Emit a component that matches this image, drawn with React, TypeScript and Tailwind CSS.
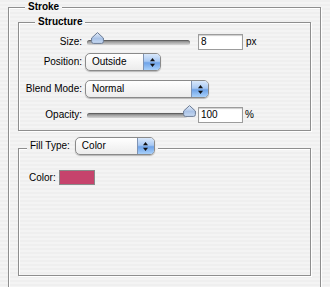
import React from "react";

const stripes =
  "bg-[repeating-linear-gradient(180deg,#efefef_0px,#efefef_2px,#f4f4f4_2px,#f4f4f4_4px)] bg-fixed";

function Arrows() {
  return (
    <svg width="7" height="11" viewBox="0 0 7 11">
      <path d="M3.5 1 L6 4.2 L1 4.2 Z" fill="#111" />
      <path d="M3.5 10 L6 6.8 L1 6.8 Z" fill="#111" />
    </svg>
  );
}

function Popup({ label, width, height = 18 }: { label: string; width: number; height?: number }) {
  return (
    <div
      className="flex rounded-[5px] border border-[#8a8a8a] bg-gradient-to-b from-[#ffffff] to-[#ececec] shadow-[0_1px_1px_rgba(0,0,0,0.25)] overflow-hidden"
      style={{ width, height }}
    >
      <div className="flex-1 flex items-center pl-[6px] text-[10px] leading-[12px] text-black">{label}</div>
      <div className="w-[17px] flex items-center justify-center border-l border-[#7f93b3] bg-[linear-gradient(180deg,#d9e8fb_0%,#a9c9f3_45%,#6fa3e8_55%,#a8d0fa_100%)]">
        <Arrows />
      </div>
    </div>
  );
}

function Thumb() {
  return (
    <svg width="13" height="12" viewBox="0 0 13 12">
      <defs>
        <linearGradient id="tg" x1="0" y1="0" x2="0" y2="1">
          <stop offset="0" stopColor="#e6eefa" />
          <stop offset="0.55" stopColor="#a9c2e6" />
          <stop offset="1" stopColor="#c9dbf3" />
        </linearGradient>
      </defs>
      <path d="M6.5 0.6 L12.4 6 L12.4 9.5 Q12.4 11.4 10.5 11.4 L2.5 11.4 Q0.6 11.4 0.6 9.5 L0.6 6 Z" fill="url(#tg)" stroke="#6c7b94" strokeWidth="1" />
    </svg>
  );
}

function Slider({ trackWidth, thumbLeft }: { trackWidth: number; thumbLeft: number }) {
  return (
    <div className="relative w-[108px] h-full flex items-center">
      <div
        className="ml-[2px] h-[5px] rounded-full bg-gradient-to-b from-[#7d7d7d] to-[#d6d6d6] shadow-[inset_0_1px_1px_rgba(0,0,0,0.3)]"
        style={{ width: trackWidth }}
      />
      <div className="absolute top-[-2px]" style={{ left: thumbLeft }}>
        <Thumb />
      </div>
    </div>
  );
}

function Field({ value }: { value: string }) {
  return (
    <div className="w-[45px] h-[16px] border border-[#9c9c9c] bg-white shadow-[inset_0_1px_1px_rgba(0,0,0,0.2)] flex items-center pl-[2px] text-[10px] leading-[12px] text-black">
      {value}
    </div>
  );
}

function Label({ children }: { children: React.ReactNode }) {
  return <div className="w-[63px] text-right text-[10px] leading-[12px] text-black">{children}</div>;
}

const box =
  "relative border border-[#8e8e8e] shadow-[1px_1px_0_#ffffff,inset_1px_1px_0_#ffffff]";

export default function App() {
  return (
    <div
      className={`w-[330px] h-[287px] overflow-hidden pt-[7px] pl-[8px] ${stripes}`}
      style={{ fontFamily: '"Liberation Sans", Arial, sans-serif' }}
    >
      <div className={`${box} w-[313px] h-[400px] pt-[14px] pl-[9px]`}>
        <div className={`absolute top-[-7px] left-[16px] px-[3px] text-[10px] leading-[12px] font-bold text-black ${stripes}`}>
          Stroke
        </div>

        <div className={`${box} w-[293px] h-[109px] pt-[11px]`}>
          <div className={`absolute top-[-7px] left-[16px] px-[3px] text-[10px] leading-[12px] font-bold text-black ${stripes}`}>
            Structure
          </div>

          <div className="flex items-center h-[16px]">
            <Label>Size:</Label>
            <div className="ml-[3px] h-full">
              <Slider trackWidth={103} thumbLeft={6} />
            </div>
            <div className="ml-[5px]">
              <Field value="8" />
            </div>
            <div className="ml-[3px] text-[10px] leading-[12px] text-black">px</div>
          </div>

          <div className="flex items-center h-[18px] mt-[3px]">
            <Label>Position:</Label>
            <div className="ml-[3px]">
              <Popup label="Outside" width={76} />
            </div>
          </div>

          <div className="flex items-center h-[18px] mt-[9px]">
            <Label>Blend Mode:</Label>
            <div className="ml-[3px]">
              <Popup label="Normal" width={124} />
            </div>
          </div>

          <div className="flex items-center h-[16px] mt-[9px]">
            <Label>Opacity:</Label>
            <div className="ml-[3px] h-full">
              <Slider trackWidth={100} thumbLeft={98} />
            </div>
            <div className="ml-[5px]">
              <Field value="100" />
            </div>
            <div className="ml-[2px] text-[10px] leading-[12px] text-black">%</div>
          </div>
        </div>

        <div className={`${box} w-[293px] h-[128px] mt-[17px] pt-[21px] pl-[10px]`}>
          <div className={`absolute top-[-12px] left-[8px] px-[3px] flex items-center ${stripes}`}>
            <div className="text-[10px] leading-[12px] text-black">Fill Type:</div>
            <div className="ml-[5px]">
              <Popup label="Color" width={80} height={18} />
            </div>
          </div>

          <div className="flex items-center h-[15px]">
            <div className="text-[10px] leading-[12px] text-black">Color:</div>
            <div className="ml-[3px] w-[36px] h-[15px] border border-[#8a8a8a] bg-[#c6436c]" />
          </div>
        </div>
      </div>
    </div>
  );
}
